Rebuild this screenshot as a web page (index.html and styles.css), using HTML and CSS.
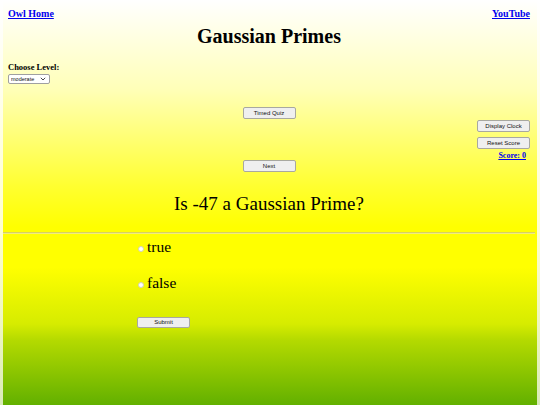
FILE: index.html
```html
<!DOCTYPE html>
<html lang="en">
  <head>
    <meta charset="UTF-8" />
    <meta name="viewport" content="width=device-width, initial-scale=1.0" />
    <title>Gaussian Primes</title>
    <link rel="stylesheet" href="styles.css">
  </head>
  <body>
    <div class="page">
      <div class="top-links">
        <a href="#">Owl Home</a>
        <a href="#">YouTube</a>
      </div>
      <h1 class="title">Gaussian Primes</h1>

      <div class="level">
        <div class="level-label">Choose Level:</div>
        <select class="level-select">
          <option>easy</option>
          <option selected>moderate</option>
          <option>hard</option>
        </select>
      </div>

      <div class="controls">
        <div class="center-col">
          <button class="btn">Timed Quiz</button>
          <button class="btn next">Next</button>
        </div>
        <div class="side-col">
          <button class="btn">Display Clock</button>
          <button class="btn">Reset Score</button>
          <div class="score"><a href="#">Score: 0</a></div>
        </div>
      </div>

      <div class="question">Is -47 a Gaussian Prime?</div>
      <hr class="divider">

      <form class="answers">
        <label class="option"><input type="radio" name="ans">true</label>
        <label class="option"><input type="radio" name="ans">false</label>
        <button type="button" class="btn submit">Submit</button>
      </form>
    </div>
  </body>
</html>
```

FILE: styles.css
```css
html {
  min-height: 100%;
  background: linear-gradient(to bottom, #ffffff 0%, #ffffd0 55%, #eef6c0 80%, #d8eab8 100%);
}

body {
  margin: 0 3px;
  min-height: 405px;
  font-family: "Liberation Serif", "Times New Roman", serif;
  color: #000;
  background: linear-gradient(to bottom, #ffffff 0%, #ffffb8 22%, #ffff30 46%, #ffff00 56%, #ffff00 66%, #d6ec00 80%, #b4da00 84%, #62b000 100%);
}

.page {
  padding: 9px 7px 0 5px;
}

.top-links {
  display: flex;
  justify-content: space-between;
  font-size: 10px;
  line-height: 10px;
  font-weight: bold;
}

.top-links a {
  color: #0000ee;
}

.title {
  margin: 5px 0 0;
  text-align: center;
  font-size: 20px;
  line-height: 24px;
}

.level {
  margin-top: 14px;
}

.level-label {
  font-size: 8.5px;
  line-height: 10px;
  font-weight: bold;
}

.level-select {
  display: block;
  margin-top: 2px;
  width: 42px;
  height: 10px;
  padding: 0 0 0 2px;
  appearance: none;
  font-family: "Liberation Sans", Arial, sans-serif;
  font-size: 5.5px;
  line-height: 8px;
  color: #111;
  border: 1px solid #a0a0a0;
  border-radius: 2px;
  background: #fff url("data:image/svg+xml,%3Csvg xmlns='http://www.w3.org/2000/svg' width='6' height='4' viewBox='0 0 6 4'%3E%3Cpath d='M0.8 0.8 L3 3 L5.2 0.8' fill='none' stroke='%23333' stroke-width='0.9'/%3E%3C/svg%3E") no-repeat right 3px center;
}

.controls {
  display: grid;
  grid-template-columns: 1fr auto 1fr;
  margin-top: 23px;
}

.center-col {
  grid-column: 2;
  display: flex;
  flex-direction: column;
  gap: 41px;
}

.side-col {
  grid-column: 3;
  justify-self: end;
  margin-top: 13px;
  display: flex;
  flex-direction: column;
  gap: 5px;
}

.btn {
  width: 53px;
  height: 12px;
  padding: 0;
  font-family: "Liberation Sans", Arial, sans-serif;
  font-size: 6px;
  color: #111;
  background: #efefef;
  border: 1px solid #a8a8a0;
  border-radius: 2px;
}

.score {
  margin-top: -3px;
  padding-right: 4px;
  text-align: right;
  font-size: 8px;
  line-height: 10px;
  font-weight: bold;
}

.score a {
  color: #0000ee;
}

.question {
  margin-top: 20px;
  text-align: center;
  font-size: 19px;
  line-height: 24px;
}

.divider {
  margin: 16px -5px 0 -5px;
  height: 0;
  border: 0;
  border-top: 1px solid #d8d060;
  border-bottom: 1px solid #f0ec80;
}

.answers {
  margin: 4px 0 0;
  padding-left: 129px;
}

.option {
  display: flex;
  align-items: center;
  height: 18px;
  margin-bottom: 18px;
  font-size: 15.5px;
}

.option input {
  appearance: none;
  width: 6px;
  height: 6px;
  margin: 3px 3px 0 1px;
  border: 1px solid #d0d0c0;
  border-radius: 50%;
  background: #fff;
}

.submit {
  margin-top: 6px;
  height: 11px;
}
```
